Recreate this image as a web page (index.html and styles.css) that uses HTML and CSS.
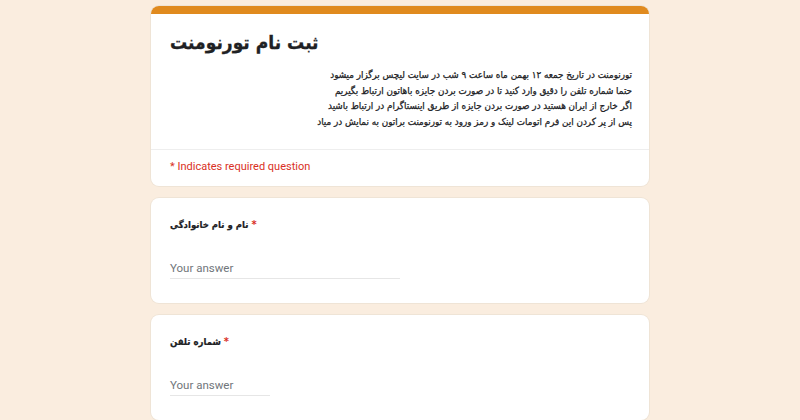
FILE: index.html
```html
<!DOCTYPE html>
<html lang="fa">
<head>
<meta charset="utf-8">
<link rel="stylesheet" href="styles.css">
</head>
<body>
<div class="page">
  <div class="card head-card">
    <div class="accent"></div>
    <div class="head">
      <div class="title">ثبت نام تورنومنت</div>
      <div class="desc" dir="rtl">
        <div>تورنومنت در تاریخ جمعه ۱۲ بهمن ماه ساعت ۹ شب در سایت لیچس برگزار میشود</div>
        <div>حتما شماره تلفن را دقیق وارد کنید تا در صورت بردن جایزه باهاتون ارتباط بگیریم</div>
        <div>اگر خارج از ایران هستید در صورت بردن جایزه از طریق اینستاگرام در ارتباط باشید</div>
        <div>پس از پر کردن این فرم اتومات لینک و رمز ورود به تورنومنت  براتون به نمایش در میاد</div>
      </div>
    </div>
    <div class="required">* Indicates required question</div>
  </div>

  <div class="card question">
    <div class="qtitle">نام و نام خانوادگی <span class="star">*</span></div>
    <div class="answer wide">Your answer</div>
  </div>

  <div class="card question">
    <div class="qtitle">شماره تلفن <span class="star">*</span></div>
    <div class="answer narrow">Your answer</div>
  </div>
</div>
</body>
</html>
```

FILE: styles.css
```css
html, body {
  margin: 0;
  padding: 0;
}
body {
  background: #faeddf;
  font-family: "DejaVu Sans Condensed", "DejaVu Sans", sans-serif;
  font-stretch: condensed;
  height: 420px;
  overflow: hidden;
}
.page {
  width: 498px;
  margin: 6px auto 0;
  display: flex;
  flex-direction: column;
  gap: 12px;
}
.card {
  background: #fff;
  border-radius: 8px;
  box-shadow: 0 0 0 1px #efe4d6;
  overflow: hidden;
}
.accent {
  height: 8px;
  background: #e08a1e;
}
.head {
  padding: 12px 17px 19px 19px;
}
.title {
  font-weight: bold;
  font-size: 19px;
  line-height: 32px;
  color: #202124;
  direction: ltr;
  text-align: left;
  -webkit-text-stroke: 0.3px #202124;
}
.desc {
  margin-top: 9px;
  font-size: 9.8px;
  line-height: 15.7px;
  color: #202124;
  text-align: right;
  -webkit-text-stroke: 0.25px #202124;
}
.required {
  border-top: 1px solid #eeeeee;
  padding: 9px 19px 11px;
  font-family: Roboto, "Liberation Sans", sans-serif;
  font-stretch: normal;
  font-size: 11px;
  line-height: 16px;
  color: #d93025;
}
.question {
  padding: 17px 19px 24px;
}
.qtitle {
  font-weight: bold;
  font-size: 9.5px;
  line-height: 20px;
  color: #202124;
  -webkit-text-stroke: 0.2px #202124;
}
.star {
  color: #d93025;
  font-size: 11px;
  -webkit-text-stroke: 0;
}
.answer {
  margin-top: 24px;
  font-family: Roboto, "Liberation Sans", sans-serif;
  font-stretch: normal;
  font-size: 11.5px;
  line-height: 18px;
  color: #70757a;
  border-bottom: 1px solid #e6e6e6;
  padding-bottom: 1px;
}
.wide {
  width: 230px;
}
.narrow {
  width: 100px;
}
```
